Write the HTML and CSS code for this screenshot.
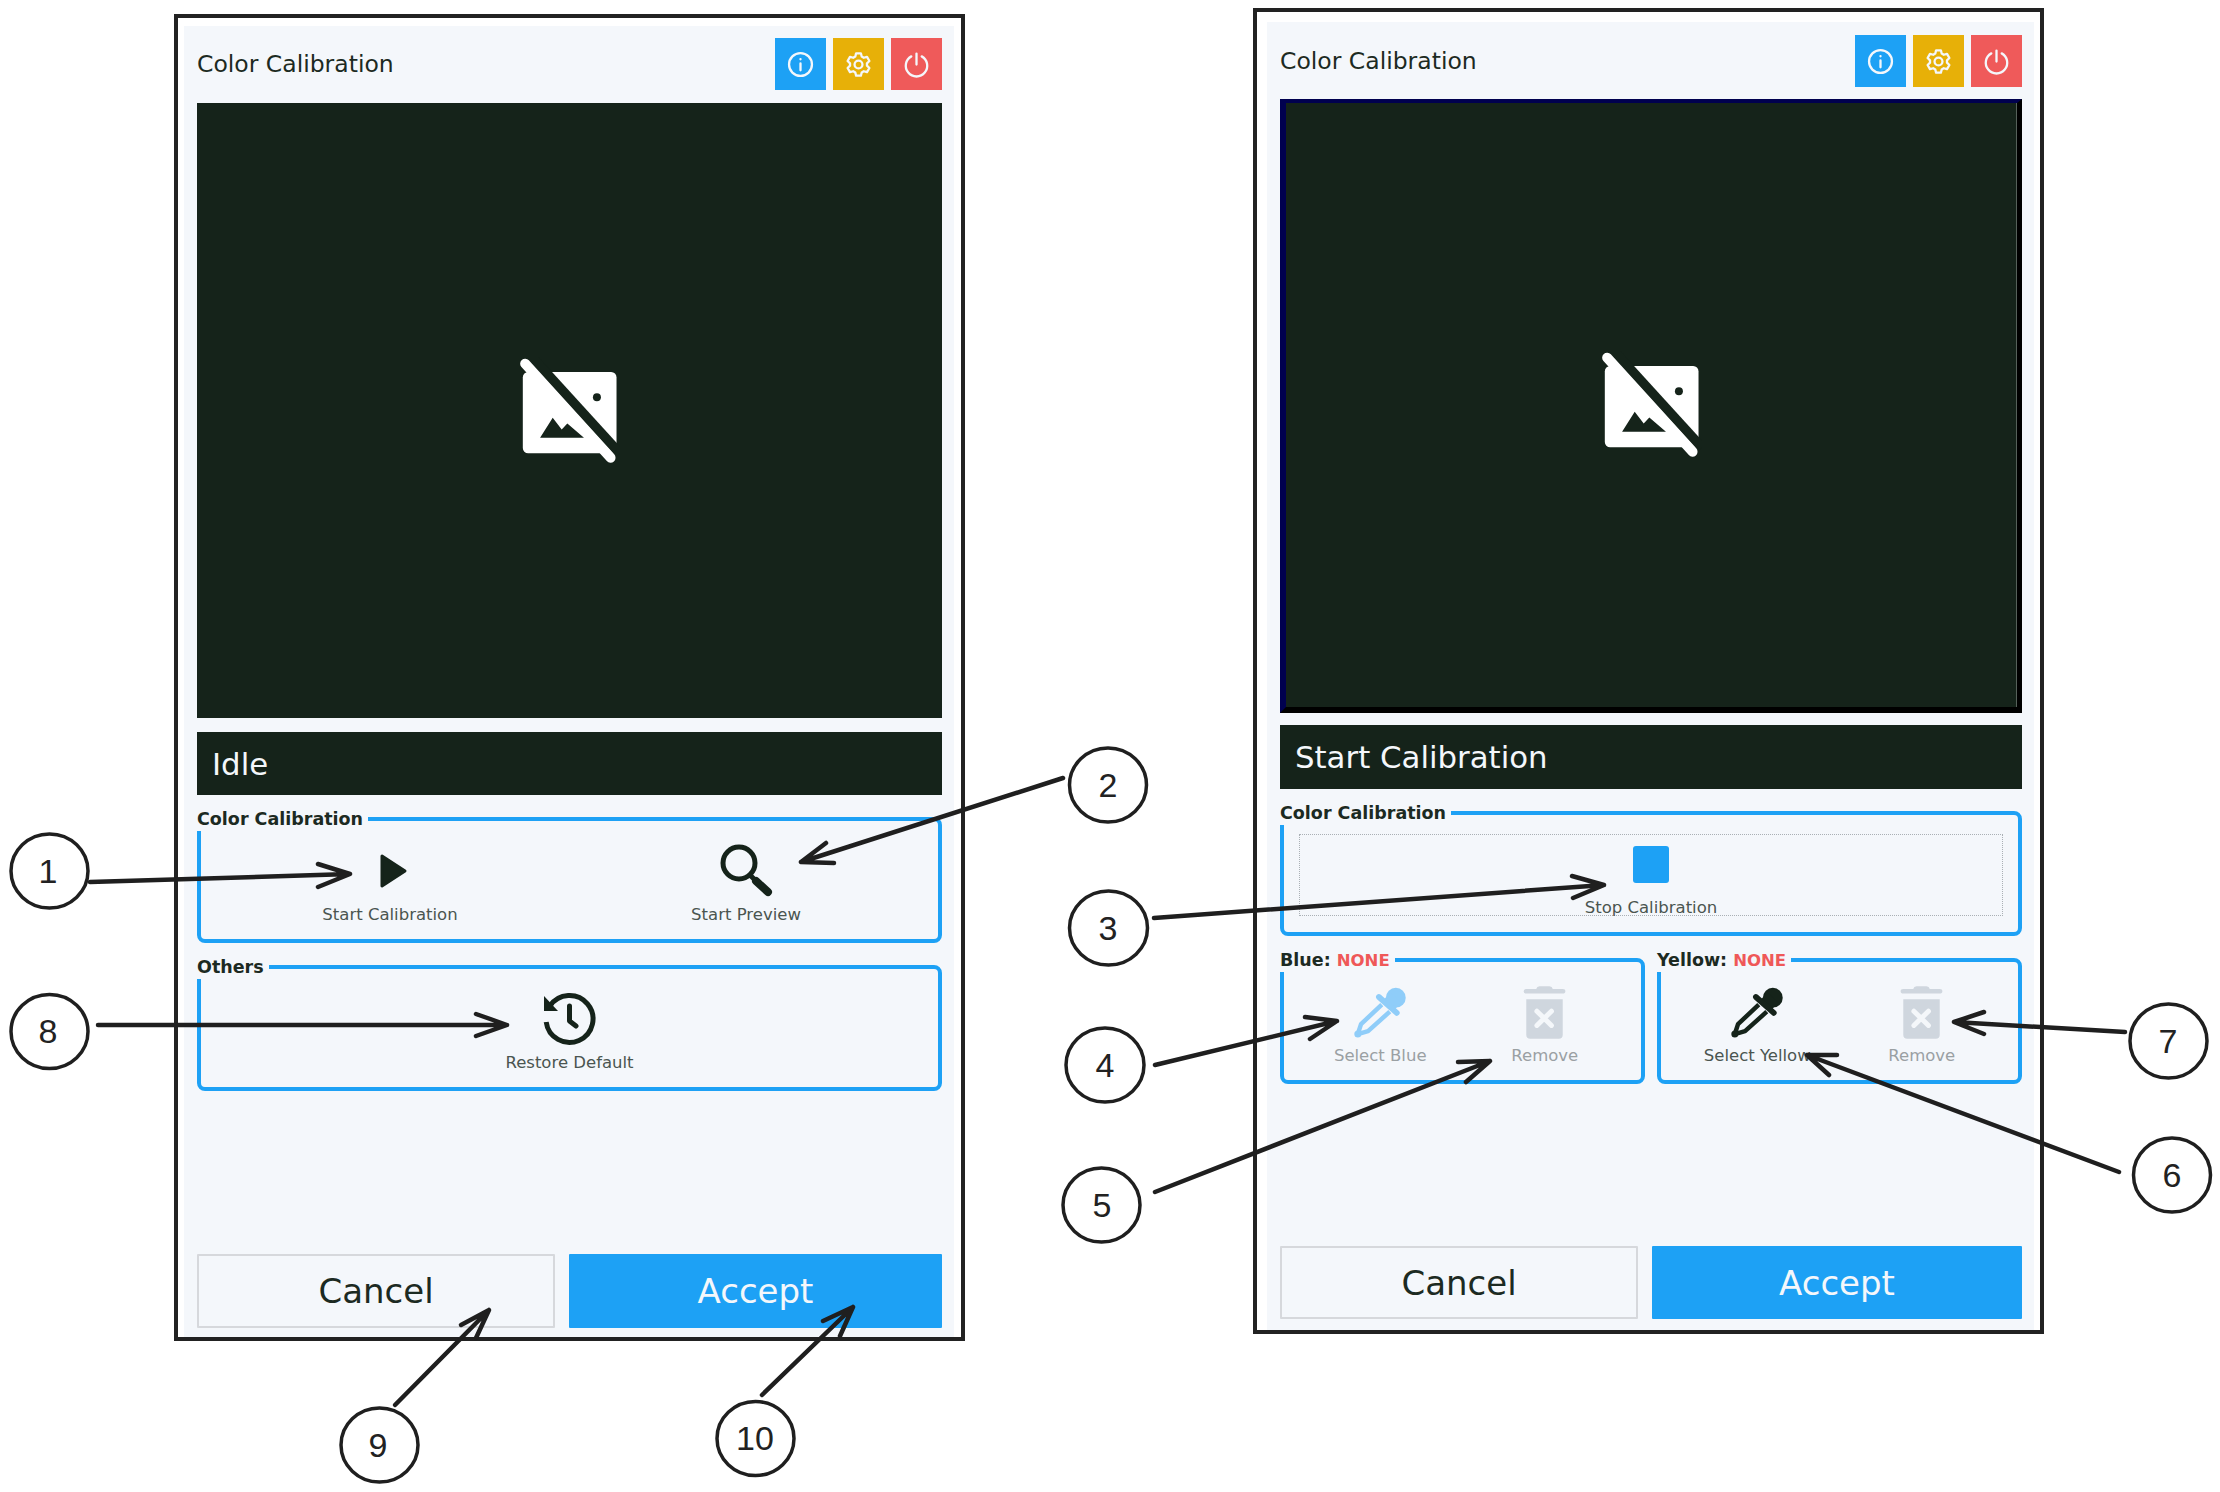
FILE: index.html
```html
<!DOCTYPE html>
<html lang="en">
<head>
<meta charset="utf-8">
<title>Color Calibration</title>
<link rel="stylesheet" href="styles.css">
</head>
<body>
<svg width="0" height="0" class="defs">
  <defs>
    <symbol id="i-noimage" viewBox="120 75 300 325">
      <rect x="128" y="120" width="282" height="245" rx="16" fill="#fff"/>
      <line x1="150" y1="70" x2="420" y2="366" stroke="#15231a" stroke-width="30"/>
      <line x1="135" y1="95" x2="392" y2="378" stroke="#fff" stroke-width="30" stroke-linecap="round"/>
      <path d="M180 318 L218 258 L245 293 L262 275 L312 318 Z" fill="#15231a"/>
      <circle cx="351" cy="196" r="12" fill="#15231a"/>
    </symbol>
    <symbol id="i-pipette" viewBox="56 26 166 162">
      <circle cx="187" cy="62" r="31" fill="currentColor"/>
      <path d="M187 62 L164 86" fill="none" stroke="currentColor" stroke-width="46"/>
      <path d="M134 60 L190 110" fill="none" stroke="currentColor" stroke-width="18" stroke-linecap="round"/>
      <path d="M143 84 L78 145 L68 176 L100 167 L168 106" fill="none" stroke="currentColor" stroke-width="14" stroke-linejoin="round"/>
      <circle cx="68" cy="176" r="11" fill="currentColor"/>
    </symbol>
    <symbol id="i-trash" viewBox="576 28 128 160">
      <path d="M615 37 Q617 29 625 29 H655 Q663 29 665 37 H695 Q703 37 703 44 Q703 51 695 51 H585 Q577 51 577 44 Q577 37 585 37 Z" fill="#cfd6de"/>
      <path d="M585 68 H695 V175 Q695 187 683 187 H597 Q585 187 585 175 Z" fill="#cfd6de"/>
      <path d="M617 104 L661 147 M661 104 L617 147" stroke="#f4f7fa" stroke-width="15" stroke-linecap="round"/>
    </symbol>
  </defs>
</svg>

<main class="canvas">

  <section class="window window-idle">
    <div class="panel">
      <header class="head">
        <h1 class="title">Color Calibration</h1>
        <div class="head-buttons">
          <button class="head-btn head-info"><svg class="head-icon" viewBox="0 0 24 24"><circle cx="12" cy="12" r="11"/><path d="M12 11 V17.5 M12 6.8 V7"/></svg></button>
          <button class="head-btn head-gear"><svg class="head-icon" viewBox="0 0 24 24"><path d="M8.93 4.4 L9.71 1.24 L14.29 1.24 L15.07 4.4 L17.05 5.54 L20.17 4.64 L22.46 8.6 L20.12 10.86 L20.12 13.14 L22.46 15.4 L20.17 19.36 L17.05 18.46 L15.07 19.6 L14.29 22.76 L9.71 22.76 L8.93 19.6 L6.95 18.46 L3.83 19.36 L1.54 15.4 L3.88 13.14 L3.88 10.86 L1.54 8.6 L3.83 4.64 L6.95 5.54 Z"/><circle cx="12" cy="12" r="3.8"/></svg></button>
          <button class="head-btn head-power"><svg class="head-icon" viewBox="0 0 24 24"><path d="M12 1.5 V12 M7 4.2 A10.3 10.3 0 1 0 17 4.2"/></svg></button>
        </div>
      </header>
      <div class="video"><svg class="noimage"><use href="#i-noimage"/></svg></div>
      <div class="status">Idle</div>
      <div class="groups">
        <div class="group">
          <div class="legend">Color Calibration</div>
          <div class="tools tools-offset">
            <div class="tool">
              <div class="tool-icon"><svg class="icon-play" viewBox="-3 0 27 34"><path d="M2 2 L25 17 L2 32 Z"/></svg></div>
              <div class="tool-label">Start Calibration</div>
            </div>
            <div class="tool">
              <div class="tool-icon"><svg class="icon-52" viewBox="0 0 52 52"><circle cx="19" cy="18" r="16" class="line5"/><path d="M30 30 L36 36" class="line4"/><path d="M36 36 L48 47" class="line8"/></svg></div>
              <div class="tool-label">Start Preview</div>
            </div>
          </div>
        </div>
        <div class="group">
          <div class="legend">Others</div>
          <div class="tools">
            <div class="tool">
              <div class="tool-icon"><svg class="icon-52" viewBox="0 0 52 52"><path d="M5.9 13 A23.5 23.5 0 1 1 2.2 29" class="line5"/><path d="M0 3 V18 H14 Z" class="solid"/><path d="M25.5 13 V28 L32 33" class="line4"/></svg></div>
              <div class="tool-label">Restore Default</div>
            </div>
          </div>
        </div>
      </div>
      <div class="actions">
        <button class="action action-cancel">Cancel</button>
        <button class="action action-accept">Accept</button>
      </div>
    </div>
  </section>

  <section class="window window-run">
    <div class="panel">
      <header class="head">
        <h1 class="title">Color Calibration</h1>
        <div class="head-buttons">
          <button class="head-btn head-info"><svg class="head-icon" viewBox="0 0 24 24"><circle cx="12" cy="12" r="11"/><path d="M12 11 V17.5 M12 6.8 V7"/></svg></button>
          <button class="head-btn head-gear"><svg class="head-icon" viewBox="0 0 24 24"><path d="M8.93 4.4 L9.71 1.24 L14.29 1.24 L15.07 4.4 L17.05 5.54 L20.17 4.64 L22.46 8.6 L20.12 10.86 L20.12 13.14 L22.46 15.4 L20.17 19.36 L17.05 18.46 L15.07 19.6 L14.29 22.76 L9.71 22.76 L8.93 19.6 L6.95 18.46 L3.83 19.36 L1.54 15.4 L3.88 13.14 L3.88 10.86 L1.54 8.6 L3.83 4.64 L6.95 5.54 Z"/><circle cx="12" cy="12" r="3.8"/></svg></button>
          <button class="head-btn head-power"><svg class="head-icon" viewBox="0 0 24 24"><path d="M12 1.5 V12 M7 4.2 A10.3 10.3 0 1 0 17 4.2"/></svg></button>
        </div>
      </header>
      <div class="video"><svg class="noimage"><use href="#i-noimage"/></svg></div>
      <div class="status">Start Calibration</div>
      <div class="groups">
        <div class="group">
          <div class="legend">Color Calibration</div>
          <div class="tools">
            <div class="tool tool-focus">
              <div class="tool-icon"><div class="stop"></div></div>
              <div class="tool-label">Stop Calibration</div>
            </div>
          </div>
        </div>
        <div class="group-row">
          <div class="group">
            <div class="legend">Blue: <span class="none">NONE</span></div>
            <div class="tools">
              <div class="tool is-disabled">
                <div class="tool-icon"><svg class="icon-pipette pipette-blue"><use href="#i-pipette"/></svg></div>
                <div class="tool-label">Select Blue</div>
              </div>
              <div class="tool is-disabled">
                <div class="tool-icon"><svg class="icon-trash"><use href="#i-trash"/></svg></div>
                <div class="tool-label">Remove</div>
              </div>
            </div>
          </div>
          <div class="group">
            <div class="legend">Yellow: <span class="none">NONE</span></div>
            <div class="tools">
              <div class="tool">
                <div class="tool-icon"><svg class="icon-pipette"><use href="#i-pipette"/></svg></div>
                <div class="tool-label">Select Yellow</div>
              </div>
              <div class="tool is-disabled">
                <div class="tool-icon"><svg class="icon-trash"><use href="#i-trash"/></svg></div>
                <div class="tool-label">Remove</div>
              </div>
            </div>
          </div>
        </div>
      </div>
      <div class="actions">
        <button class="action action-cancel">Cancel</button>
        <button class="action action-accept">Accept</button>
      </div>
    </div>
  </section>

  <svg class="notes" viewBox="0 0 2220 1492" width="2220" height="1492">
    <g class="note-ring">
      <ellipse cx="49.5" cy="871" rx="38.5" ry="37"/>
      <ellipse cx="1108" cy="785" rx="38.5" ry="37"/>
      <ellipse cx="1108.5" cy="928" rx="39" ry="37"/>
      <ellipse cx="1105" cy="1065" rx="39" ry="37"/>
      <ellipse cx="1101.5" cy="1205" rx="38.5" ry="37"/>
      <ellipse cx="2172" cy="1175" rx="38.5" ry="37"/>
      <ellipse cx="2168.5" cy="1041" rx="38.5" ry="37"/>
      <ellipse cx="49.5" cy="1031.5" rx="38.5" ry="37"/>
      <ellipse cx="379.5" cy="1445" rx="38.5" ry="37"/>
      <ellipse cx="755.5" cy="1438.5" rx="38.5" ry="37"/>
    </g>
    <g class="note-num">
      <text x="48" y="883">1</text>
      <text x="1108" y="797">2</text>
      <text x="1108" y="940">3</text>
      <text x="1105" y="1077">4</text>
      <text x="1102" y="1217">5</text>
      <text x="2172" y="1187">6</text>
      <text x="2168" y="1053">7</text>
      <text x="48" y="1043">8</text>
      <text x="378" y="1457">9</text>
      <text x="755" y="1450">10</text>
    </g>
    <g class="note-arrow">
      <path d="M90 882 L350 874 M318 864 L350 874 L318 887"/>
      <path d="M1063 778 L801 862 M826 843 L801 862 L834 863"/>
      <path d="M1154 918 L1604 885 M1572 876 L1604 885 L1573 898"/>
      <path d="M1155 1065 L1337 1021 M1305 1017 L1337 1021 L1310 1039"/>
      <path d="M1155 1192 L1490 1061 M1458 1062 L1490 1061 L1466 1082"/>
      <path d="M2119 1172 L1807 1055 M1837 1055 L1807 1055 L1829 1075"/>
      <path d="M2125 1032 L1954 1022 M1984 1012 L1954 1022 L1984 1034"/>
      <path d="M98 1025 L507 1025 M476 1014 L507 1025 L476 1036"/>
      <path d="M395 1405 L489 1310 M461 1325 L489 1310 L476 1338"/>
      <path d="M762 1395 L853 1307 M823 1321 L853 1307 L840 1336"/>
    </g>
  </svg>

</main>
</body>
</html>
```

FILE: styles.css
```css
* { box-sizing: border-box; }

html, body {
  margin: 0;
  padding: 0;
  background: #fff;
}

body {
  font-family: "DejaVu Sans", sans-serif;
  color: #15231a;
}

.defs { position: absolute; }

.canvas {
  position: relative;
  width: 2220px;
  height: 1492px;
  overflow: hidden;
}

/* windows on the free canvas */
.window {
  position: absolute;
  display: flex;
  flex-direction: column;
  background: #fff;
  border: 4px solid #222;
}

.window-idle { left: 174px; top: 14px; width: 791px; height: 1327px; }
.window-run { left: 1253px; top: 8px; width: 791px; height: 1326px; }

.panel {
  flex: 1;
  display: flex;
  flex-direction: column;
  background: #f4f7fb;
}

.window-idle .panel { margin: 8px 7px 0 6px; padding: 12px 12px 9px 13px; }
.window-run .panel { margin: 10px 6px 0 10px; padding: 13px 12px 11px 13px; }

/* header */
.head {
  display: flex;
  justify-content: space-between;
  align-items: center;
  height: 52px;
}

.title {
  margin: 0;
  font-size: 23.5px;
  font-weight: 400;
  color: #1c2a22;
}

.head-buttons {
  display: flex;
  gap: 7px;
}

.head-btn {
  display: flex;
  align-items: center;
  justify-content: center;
  width: 51px;
  height: 52px;
  padding: 0;
  border: 0;
}

.head-info { background: #1da1f5; }
.head-gear { background: #e7b008; }
.head-power { background: #ef5a5a; }

.head-icon {
  width: 25px;
  height: 25px;
  fill: none;
  stroke: #f4f7fb;
  stroke-width: 2.2;
  stroke-linecap: round;
  stroke-linejoin: round;
  overflow: visible;
}

/* video */
.video {
  display: flex;
  align-items: center;
  justify-content: center;
  background: #15231a;
}

.window-idle .video { height: 615px; margin-top: 13px; }

.window-run .video {
  height: 614px;
  margin-top: 12px;
  border-style: solid;
  border-width: 4px 5px 6px 6px;
  border-color: #00004f #000 #000 #00004f;
  box-shadow: inset -1px 0 0 #56615a;
}

.noimage {
  width: 100px;
  height: 108px;
}

/* status strip */
.status {
  display: flex;
  align-items: center;
  padding-left: 15px;
  background: #15231a;
  color: #f4f7fb;
  font-size: 30.8px;
}

.window-idle .status { height: 63px; margin-top: 14px; }
.window-run .status { height: 64px; margin-top: 12px; }

/* groups */
.groups {
  display: flex;
  flex-direction: column;
  gap: 22px;
  margin-top: 22px;
}

.group-row {
  display: flex;
  gap: 12px;
}

.group-row .group { flex: 1; }

.group {
  position: relative;
  height: 126px;
  border: 4px solid #1da1f5;
  border-radius: 8px;
}

.window-run .group { height: 125px; }
.window-run .group-row .group { height: 126px; }

.legend {
  position: absolute;
  top: -14px;
  left: -4px;
  height: 24px;
  padding-right: 5px;
  background: #f4f7fb;
  font-size: 17.5px;
  font-weight: 700;
  line-height: 24px;
  color: #1c2a22;
  white-space: nowrap;
}

.none {
  color: #ef5858;
  font-size: 16.5px;
}

.tools {
  display: flex;
  padding: 19px 14px 16px;
}

.tools-offset { padding-left: 11px; }

.tool {
  flex: 1;
  display: flex;
  flex-direction: column;
  align-items: center;
  height: 82px;
  padding-top: 5px;
}

.tool-focus {
  margin: 0 1px;
  padding-top: 3px;
  border: 1px dotted #aab0b5;
}

.tool-icon {
  flex: none;
  display: flex;
  align-items: center;
  justify-content: center;
  height: 52px;
  color: #15231a;
}

.tool-label {
  flex: none;
  margin-top: 8px;
  font-size: 16.5px;
  line-height: 20px;
  color: #4a5550;
  white-space: nowrap;
}

.is-disabled .tool-label { color: #9aa0a3; }

.icon-play { width: 27px; height: 34px; overflow: visible; fill: #15231a; stroke: #15231a; stroke-width: 3; stroke-linejoin: round; }
.icon-52 { width: 52px; height: 52px; overflow: visible; }
.icon-pipette { width: 53px; height: 52px; }
.pipette-blue { color: #8fcdf9; }
.icon-trash { width: 43px; height: 53px; }

.stop {
  width: 36px;
  height: 37px;
  border-radius: 3px;
  background: #1da1f5;
}

.line4, .line5, .line8 {
  fill: none;
  stroke: #15231a;
  stroke-linecap: round;
  stroke-linejoin: round;
}
.line4 { stroke-width: 5; }
.line5 { stroke-width: 5; stroke-linecap: butt; }
.line8 { stroke-width: 8; }
.solid { fill: #15231a; }

/* bottom actions */
.actions {
  display: flex;
  gap: 14px;
  margin-top: auto;
}

.action {
  font-family: inherit;
  font-size: 34px;
  padding: 0;
  border-radius: 1px;
}

.window-idle .action { height: 74px; }
.window-run .action { height: 73px; }

.action-cancel {
  flex: 0 0 358px;
  background: #f4f7fb;
  border: 2px solid #d6d8dc;
  color: #1c2a22;
}

.action-accept {
  flex: 1;
  background: #1da1f5;
  border: 0;
  color: #f4f7fb;
}

/* annotations on top */
.notes {
  position: absolute;
  left: 0;
  top: 0;
}

.note-ring ellipse {
  fill: #fff;
  stroke: #1f1f1f;
  stroke-width: 3.5;
}

.note-num text {
  font-family: "Liberation Sans", Arial, sans-serif;
  font-size: 34px;
  fill: #222;
  text-anchor: middle;
}

.note-arrow path {
  fill: none;
  stroke: #1f1f1f;
  stroke-width: 4.5;
  stroke-linecap: round;
  stroke-linejoin: round;
}
```
